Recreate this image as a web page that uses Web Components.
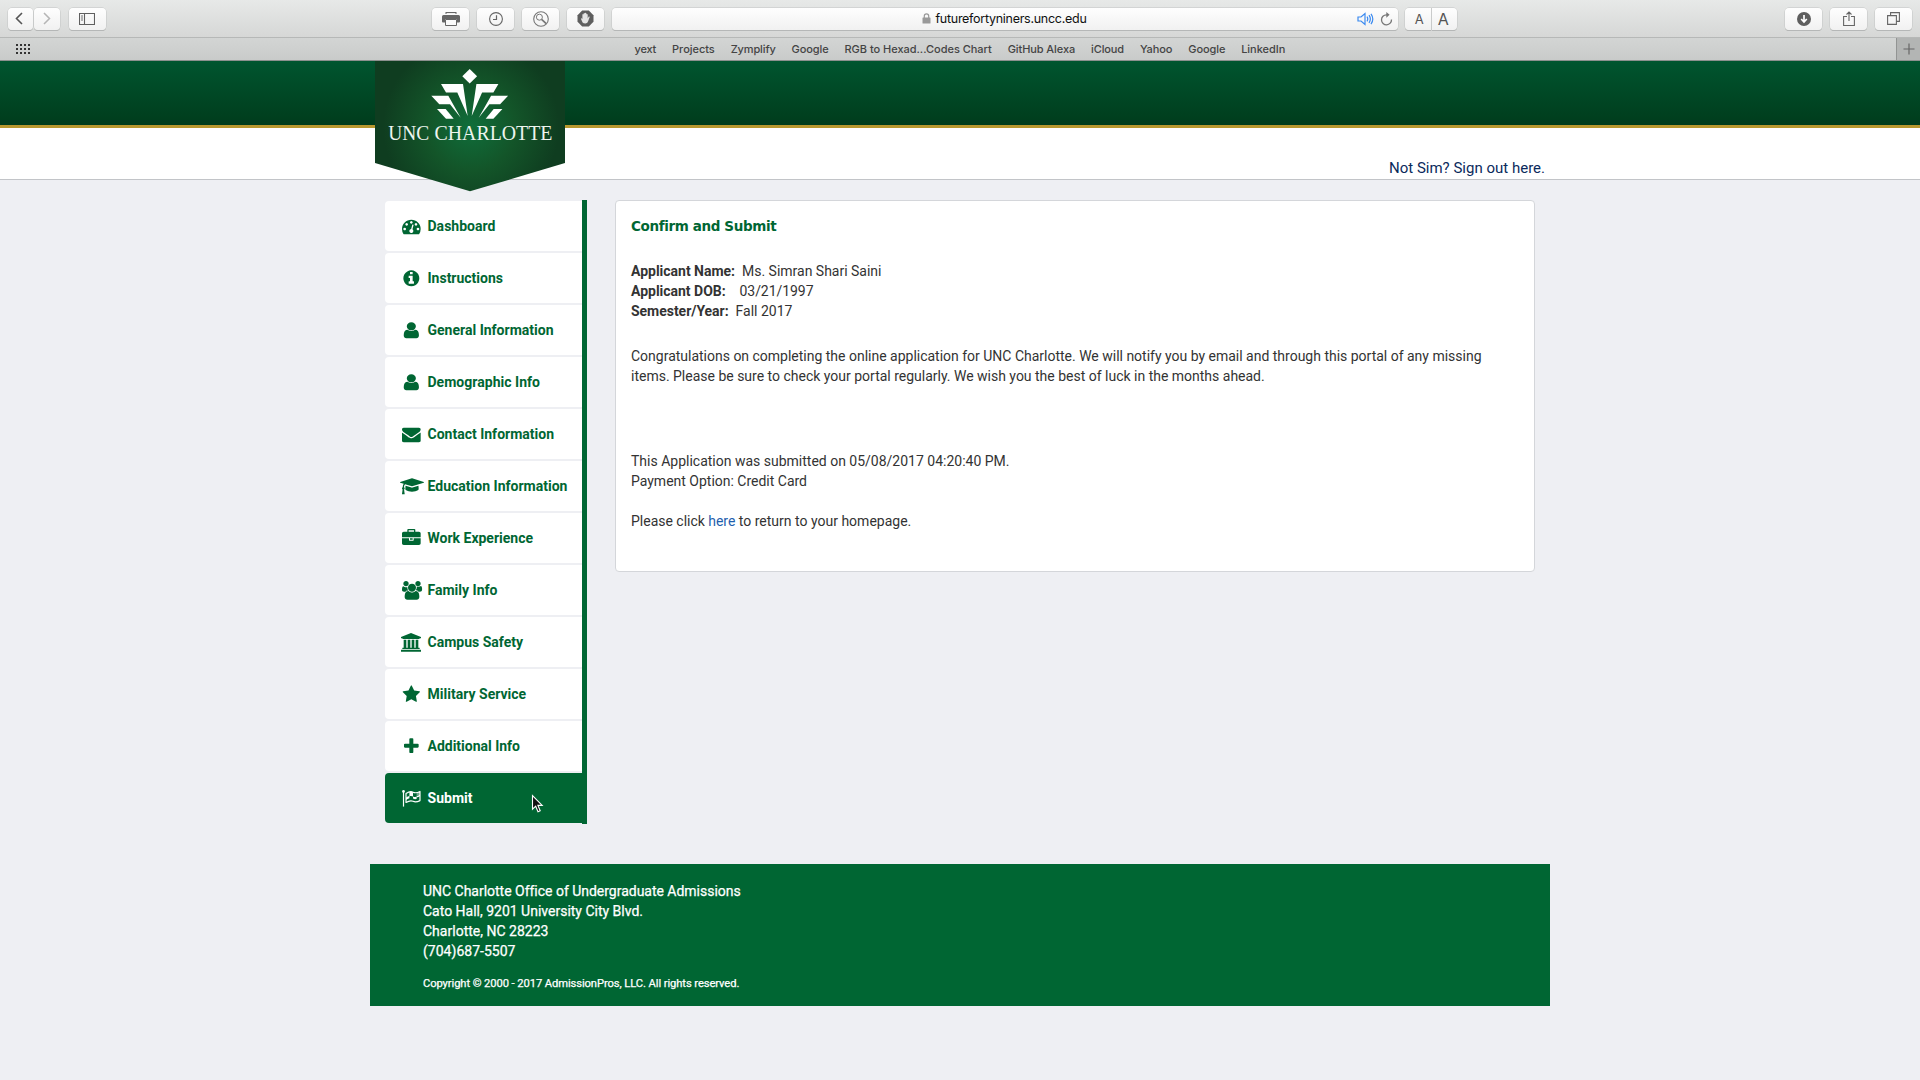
<!DOCTYPE html>
<html lang="en">
<head>
<meta charset="utf-8">
<title>Confirm and Submit</title>
<style>
html,body{margin:0;height:1080px;overflow:hidden}
body{background:#eeeff3;font-family:Roboto,"Liberation Sans",sans-serif;font-size:14px;line-height:20px;color:#333}
</style>
</head>
<body>
<portal-app></portal-app>
<script>
const make=(name,html,after)=>customElements.define(name,class extends HTMLElement{
  constructor(){super();this.attachShadow({mode:'open'});}
  connectedCallback(){if(this.done)return;this.done=true;this.shadowRoot.innerHTML=typeof html==='function'?html(this):html;if(after)after(this);}
});

/* One line of text spaced so that it takes the width in its w attribute. */
make('fit-line','<style>:host{display:inline-block;white-space:pre}span{display:inline-block}</style><span><slot></slot></span>',el=>{
  const w=parseFloat(el.getAttribute('w'));
  const n=el.textContent.length;
  const now=el.shadowRoot.querySelector('span').getBoundingClientRect().width;
  if(w&&n&&now){el.style.letterSpacing=((w-now)/n)+'px';}
});

const glyphs={
dash:[1792,'M384 1152q0-53-37.5-90.5t-90.5-37.5-90.5 37.5-37.5 90.5 37.5 90.5 90.5 37.5 90.5-37.5 37.5-90.5zm192-448q0-53-37.5-90.5t-90.5-37.5-90.5 37.5-37.5 90.5 37.5 90.5 90.5 37.5 90.5-37.5 37.5-90.5zm428 481l101-382q6-26-7.5-48.5t-38.5-29.5-48 6.5-30 39.5l-101 382q-60 5-107 43.5t-63 98.5q-20 77 20 146t117 89 146-20 89-117q16-60-6-117t-72-91zm660-33q0-53-37.5-90.5t-90.5-37.5-90.5 37.5-37.5 90.5 37.5 90.5 90.5 37.5 90.5-37.5 37.5-90.5zm-640-640q0-53-37.5-90.5t-90.5-37.5-90.5 37.5-37.5 90.5 37.5 90.5 90.5 37.5 90.5-37.5 37.5-90.5zm448 192q0-53-37.5-90.5t-90.5-37.5-90.5 37.5-37.5 90.5 37.5 90.5 90.5 37.5 90.5-37.5 37.5-90.5zm320 448q0 261-141 483-19 29-54 29h-1402q-35 0-54-29-141-221-141-483 0-182 71-348t191-286 286-191 348-71 348 71 286 191 191 286 71 348z'],
info:[1792,'M1152 1376v-160q0-14-9-23t-23-9h-96v-512q0-14-9-23t-23-9h-320q-14 0-23 9t-9 23v160q0 14 9 23t23 9h96v320h-96q-14 0-23 9t-9 23v160q0 14 9 23t23 9h448q14 0 23-9t9-23zm-128-896v-160q0-14-9-23t-23-9h-192q-14 0-23 9t-9 23v160q0 14 9 23t23 9h192q14 0 23-9t9-23zm640 416q0 209-103 385.5t-279.5 279.5-385.5 103-385.5-103-279.5-279.5-103-385.5 103-385.5 279.5-279.5 385.5-103 385.5 103 279.5 279.5 103 385.5z'],
user:[1792,'M1536 1399q0 109-62.5 187t-150.5 78h-854q-88 0-150.5-78t-62.5-187q0-85 8.5-160.5t31.5-152 58.5-131 94-89 134.5-34.5q131 128 313 128t313-128q76 0 134.5 34.5t94 89 58.5 131 31.5 152 8.5 160.5zm-256-887q0 159-112.5 271.5t-271.5 112.5-271.5-112.5-112.5-271.5 112.5-271.5 271.5-112.5 271.5 112.5 112.5 271.5z'],
mail:[1792,'M1792 710v794q0 66-47 113t-113 47h-1472q-66 0-113-47t-47-113v-794q44 49 101 87 362 246 497 345 57 42 92.5 65.5t94.5 48 110 24.5h2q51 0 110-24.5t94.5-48 92.5-65.5q170-123 498-345 57-39 100-87zm0-294q0 79-49 151t-122 123q-376 261-468 325-10 7-42.5 31t-54 38.5-52 32.5-57.5 27-50 9h-2q-23 0-50-9t-57.5-27-52-32.5-54-38.5-42.5-31q-91-64-262-182.5t-205-142.5q-62-42-117-115.5t-55-136.5q0-78 41.5-130t118.5-52h1472q65 0 112.5 47t47.5 113z'],
cap:[2304,'M1774 836l18 316q4 69-82 128t-235 93.5-323 34.5-323-34.5-235-93.5-82-128l18-316 574 181q22 7 48 7t48-7zm530-324q0 23-22 31l-1120 352q-4 1-10 1t-10-1l-652-206q-43 34-71 111.5t-34 178.5q63 36 63 109 0 69-58 107l58 433q2 14-8 25-9 11-24 11h-192q-15 0-24-11-10-11-8-25l58-433q-58-38-58-107 0-73 65-111 11-207 98-330l-333-104q-22-8-22-31t22-31l1120-352q4-1 10-1t10 1l1120 352q22 8 22 31z'],
work:[1792,'M640 256h512v-128h-512v128zm1152 640v480q0 66-47 113t-113 47h-1472q-66 0-113-47t-47-113v-480h672v160q0 26 19 45t45 19h320q26 0 45-19t19-45v-160h672zm-768 0v128h-256v-128h256zm768-480v384h-1792v-384q0-66 47-113t113-47h352v-160q0-40 28-68t68-28h576q40 0 68 28t28 68v160h352q66 0 113 47t47 113z'],
users:[1920,'M593 896q-162 5-265 128h-134q-82 0-138-40.5t-56-118.5q0-353 124-353 6 0 43.5 21t97.5 42.5 119 21.5q67 0 133-23-5 37-5 66 0 159 93 294zm1071 637q0 120-73 189.5t-194 69.5h-874q-121 0-194-69.5t-73-189.5q0-53 3.5-103.5t14-109 26.5-108.5 43-97.5 62-81 85.5-53.5 111.5-20q10 0 43 21.5t73 48 107 48 135 21.5 135-21.5 107-48 73-48 43-21.5q61 0 111.5 20t85.5 53.5 62 81 43 97.5 26.5 108.5 14 109 3.5 103.5zm-1024-1277q0 106-75 181t-181 75-181-75-75-181 75-181 181-75 181 75 75 181zm704 384q0 159-112.5 271.5t-271.5 112.5-271.5-112.5-112.5-271.5 112.5-271.5 271.5-112.5 271.5 112.5 112.5 271.5zm576 225q0 78-56 118.5t-138 40.5h-134q-103-123-265-128 93-135 93-294 0-29-5-66 66 23 133 23 59 0 119-21.5t97.5-42.5 43.5-21q124 0 124 353zm-128-609q0 106-75 181t-181 75-181-75-75-181 75-181 181-75 181 75 75 181z'],
bank:[2048,'M960 0l960 384v128h-128q0 26-20.5 45t-48.5 19h-1526q-28 0-48.5-19t-20.5-45h-128v-128zm-704 640h256v768h128v-768h256v768h128v-768h256v768h128v-768h256v768h59q28 0 48.5 19t20.5 45v64h-1664v-64q0-26 20.5-45t48.5-19h59v-768zm1595 960q28 0 48.5 19t20.5 45v128h-1920v-128q0-26 20.5-45t48.5-19h1782z'],
star:[1792,'M1728 647q0 22-26 48l-363 354 86 500q1 7 1 20 0 21-10.5 35.5t-30.5 14.5q-19 0-40-12l-449-236-449 236q-22 12-40 12-21 0-31.5-14.5t-10.5-35.5q0-6 2-20l86-500-364-354q-25-27-25-48 0-37 56-46l502-73 225-455q19-41 49-41t49 41l225 455 502 73q56 9 56 46z'],
plus:[1792,'M1600 736v192q0 40-28 68t-68 28h-416v416q0 40-28 68t-68 28h-192q-40 0-68-28t-28-68v-416h-416q-40 0-68-28t-28-68v-192q0-40 28-68t68-28h416v-416q0-40 28-68t68-28h192q40 0 68 28t28 68v416h416q40 0 68 28t28 68z']
};
const flag=`<svg width="19" height="18.67" viewBox="0 0 19 18.67" fill="none" stroke="currentColor"><circle cx="1.500" cy="2.400" r="1.300" fill="currentColor" stroke="none"/><path d="M1.500 2.500V17.600" stroke-width="1.200"/><path d="M4 4.400C7 2.600 9 2.200 11 3.200C13 4.200 15 4 18 2.500V11.600C15 13.100 13 13.300 11 12.300C9 11.300 7 11.700 4 13.500z" stroke-width="1.200" stroke-linejoin="round"/><g fill="currentColor" stroke="none"><path d="M7.400 3C8.800 2.500 10 2.700 11 3.200V7.600C10 7.100 8.800 6.900 7.400 7.400z"/><path d="M14.600 4C15.600 3.700 16.800 3.100 18 2.500V5.600C16.800 6.300 15.600 6.700 14.600 7z" opacity=".45"/><path d="M4 8.400C5.200 7.700 6.300 7.200 7.400 6.900V9.200C6.300 9.600 5.200 10.200 4 10.900z"/><path d="M11 7.400C12.200 8 13.300 8.100 14.600 7.800V10C13.300 10.300 12.200 10.200 11 9.600z"/><path d="M14.600 7.200C15.600 7 16.800 6.400 18 5.800V7.200C16.800 7.900 15.600 8.300 14.600 8.500z"/></g></svg>`;

make('nav-item',el=>{
  const k=el.getAttribute('icon'),g=glyphs[k];
  const ic=g?`<svg width="${(g[0]*18.67/1792).toFixed(2)}" height="18.67" viewBox="0 0 ${g[0]} 1792" fill="currentColor"><path d="${g[1]}"${k==='user'?' transform="translate(-125 0) scale(1.14 1)"':''}/></svg>`:flag;
  return `<style>:host{display:flex;align-items:center;box-sizing:border-box;height:50px;padding-left:14.500px;background:#fff;border-radius:4px 0 0 4px;color:#063;font-weight:700}
  :host([active]){background:#063;color:#fff}
  i{display:flex;justify-content:center;width:24px;margin-right:4px;flex:none}svg{display:block;flex:none;overflow:visible}</style><i>${ic}</i><fit-line w="${el.getAttribute('w')}">${el.getAttribute('label')}</fit-line>`;
});

make('side-nav',`<style>:host{display:flex;flex-direction:column;gap:2px;width:197px;height:622px;padding:1px 0;border-right:5px solid #063;flex:none}</style>
<nav-item icon="dash" label="Dashboard" w="68"></nav-item>
<nav-item icon="info" label="Instructions" w="75.500"></nav-item>
<nav-item icon="user" label="General Information" w="126"></nav-item>
<nav-item icon="user" label="Demographic Info" w="112.500"></nav-item>
<nav-item icon="mail" label="Contact Information" w="126.500"></nav-item>
<nav-item icon="cap" label="Education Information" w="140"></nav-item>
<nav-item icon="work" label="Work Experience" w="105.500"></nav-item>
<nav-item icon="users" label="Family Info" w="70"></nav-item>
<nav-item icon="bank" label="Campus Safety" w="95.500"></nav-item>
<nav-item icon="star" label="Military Service" w="98.700"></nav-item>
<nav-item icon="plus" label="Additional Info" w="92.500"></nav-item>
<nav-item icon="flag" label="Submit" w="45"  active></nav-item>`);

make('tool-button',`<style>:host{display:flex;align-items:center;justify-content:center;box-sizing:border-box;width:37px;height:22.500px;border-radius:4px;background:linear-gradient(#fefefe,#f1f1f1);box-shadow:0 0 0 .5px #c2c4c3,0 1px 0 #a9abaa;color:#666;flex:none}::slotted(svg){display:block;flex:none}</style><slot></slot>`);

make('address-bar',`<style>:host{display:flex;align-items:center;box-sizing:border-box;width:786px;height:22.500px;border-radius:4px;background:linear-gradient(#fefefe,#f1f1f1);box-shadow:0 0 0 .5px #c2c4c3,0 1px 0 #a9abaa;padding-left:310px;font:12.5px/22px Inter,sans-serif;color:#111;flex:none}
svg{display:block;flex:none}.lock{margin-right:5px}.sp{margin-left:auto;margin-right:6px}.re{margin-right:5px}</style>
<svg class="lock" width="9" height="11" viewBox="0 0 9 11"><rect x=".5" y="4.500" width="8" height="6" rx=".6" fill="#999"/><path d="M2.300 5V3a2.200 2.200 0 0 1 4.400 0v2" fill="none" stroke="#999" stroke-width="1.200"/></svg>
<fit-line w="151">futurefortyniners.uncc.edu</fit-line>
<svg class="sp" width="17" height="14" viewBox="0 0 17 14" fill="none" stroke="#3b8af0" stroke-width="1.200"><path d="M1 5h3l4-3.500v11L4 9H1z"/><path d="M10 4.700q1.500 2.300 0 4.600M12 3.200q2.700 3.800 0 7.600M14 1.800q3.600 5.200 0 10.400"/></svg>
<svg class="re" width="13" height="14" viewBox="0 0 13 14"><path d="M11.500 7.500A5 5 0 1 1 6.500 2.800h1.300" fill="none" stroke="#777" stroke-width="1.300"/><path d="M6.300 0l3.300 2.800-3.300 2.900z" fill="#777"/></svg>`);

make('browser-toolbar',`<style>
:host{display:flex;align-items:flex-start;box-sizing:border-box;height:38px;padding:7.500px 8px 0 7.500px;background:linear-gradient(#e7e9e8,#d6d7d6);border-bottom:1px solid #b6b8b7}
.nav{display:flex;gap:1px;margin-right:9px}.nav tool-button{width:25.500px}.nav tool-button:first-child{padding-right:2px}
.mid{display:flex;gap:8px;margin-left:326.500px;margin-right:7.500px}
.aa{display:flex;gap:1px;margin-left:7.500px}.aa tool-button{width:25.500px;font-family:Inter,sans-serif;color:#555}.aa tool-button:first-child{border-radius:4px 0 0 4px;font-size:13px;padding-left:3px}.aa tool-button:last-child{border-radius:0 4px 4px 0;font-size:16px;padding-right:2px}
.end{display:flex;gap:8px;margin-left:auto}svg{display:block}</style>
<div class="nav"><tool-button><svg width="8" height="13" viewBox="0 0 8 13" fill="none" stroke="#555" stroke-width="1.600"><path d="M7 1L1.500 6.500 7 12"/></svg></tool-button><tool-button><svg width="8" height="13" viewBox="0 0 8 13" fill="none" stroke="#b5b5b5" stroke-width="1.500"><path d="M1 1l5.500 5.500L1 12"/></svg></tool-button></div>
<tool-button><svg width="16" height="12" viewBox="0 0 16 12" fill="none" stroke="#5f5f5f"><path d="M.5.500h15v11H.5zM5.500.500v11" stroke-width="1.100"/><path d="M2 3h2M2 5h2M2 7h2" stroke-width=".9"/></svg></tool-button>
<div class="mid">
<tool-button><svg width="18" height="14" viewBox="0 0 18 14"><path d="M3.500 0h11v2h-11z" fill="#666"/><path d="M4.500 1h9v1h-9z" fill="#eee"/><path d="M1.500 3h15Q18 3 18 4.500v5q0 1-1 1h-2V7H3v3.500H1q-1 0-1-1v-5Q0 3 1.500 3z" fill="#666"/><path d="M3.500 7.500h11v6h-11z" fill="#fafafa" stroke="#666"/></svg></tool-button>
<tool-button><svg width="14" height="14" viewBox="0 0 14 14" fill="none" stroke="#666"><circle cx="7" cy="7" r="6.400" stroke-width="1.100"/><path d="M7.500 3.300v4.200H4" stroke-width="1.200"/></svg></tool-button>
<tool-button><svg width="16" height="16" viewBox="0 0 16 16" fill="none" stroke="#777"><circle cx="8" cy="8" r="7.300" stroke-width="1.100"/><circle cx="6.400" cy="6.200" r="3"/><path d="M8.600 8.400l4.600 4.300" stroke-width="1.700"/></svg></tool-button>
<tool-button><svg width="17" height="17" viewBox="0 0 17 17"><path d="M5.200.5h6.600l4.700 4.700v6.600l-4.700 4.700H5.200L.5 11.800V5.200z" fill="#5e5e5e"/><path d="M5.600 12.500L3.900 8.700q.8-.9 1.500.4V4.400q.6-.8 1.200 0v-1q.7-.9 1.400 0v-.3q.8-.8 1.400.2v.900q.9-.7 1.300.3v3.900l1-1.800q1-.4 1 .5l-1.500 4q-.5 2.300-2.600 2.300-2.300 0-3-.900z" fill="#e4e4e4"/></svg></tool-button>
</div>
<address-bar></address-bar>
<div class="aa"><tool-button>A</tool-button><tool-button>A</tool-button></div>
<div class="end">
<tool-button><svg width="14" height="14" viewBox="0 0 14 14"><circle cx="7" cy="7" r="7" fill="#5e5e5e"/><path d="M7 3v6M4.200 7L7 10l2.800-3" fill="none" stroke="#fff" stroke-width="1.700"/></svg></tool-button>
<tool-button><svg width="12" height="16" viewBox="0 0 12 16" fill="none" stroke="#666" stroke-width="1.100"><path d="M4 5.500H.6v9h10.800v-9H8M6 10V1M3.500 3.500L6 1l2.500 2.500"/></svg></tool-button>
<tool-button><svg width="13" height="13" viewBox="0 0 13 13" fill="none" stroke="#666" stroke-width="1.100"><path d="M.6 3.600h8.800v8.800H.6zM3.600 3.600v-3h8.800v8.800h-3"/></svg></tool-button>
</div>`);

make('bookmarks-bar',`<style>
:host{display:flex;align-items:stretch;box-sizing:border-box;height:23px;padding-left:16px;background:linear-gradient(#d3d5d4,#c9cbca);border-bottom:1px solid #8c908e;font:500 11px/22px Inter,sans-serif;color:#444}
.grid{display:block;margin-top:6px;flex:none}.list{display:flex;gap:15.900px;margin-left:604.500px;line-height:23px}
.plus{margin-left:auto;display:flex;align-items:center;justify-content:center;box-sizing:border-box;width:24px;background:#b3b5b4;border-left:1px solid #929493}</style>
<svg class="grid" width="14" height="10" viewBox="0 0 14 10" fill="#333">${[0,4,8,12].map(x=>[0,4,8].map(y=>`<rect x="${x}" y="${y}" width="2" height="2"/>`).join('')).join('')}</svg>
<div class="list">${[['yext',21.7],['Projects',42.7],['Zymplify',45],['Google',37],['RGB to Hexad...Codes Chart',147.300],['GitHub Alexa',67.500],['iCloud',33],['Yahoo',32.500],['Google',37],['LinkedIn',44]].map(b=>`<fit-line w="${b[1]}">${b[0]}</fit-line>`).join('')}</div>
<div class="plus"><svg width="12" height="12" viewBox="0 0 12 12"><path d="M6 .5v11M.5 6h11" stroke="#666" stroke-width="1.200"/></svg></div>`);

make('uncc-logo',`<style>:host{display:block;width:190px;height:131px}svg{display:block}text{font-family:"Liberation Serif",serif}</style>
<svg width="190" height="131" viewBox="0 0 190 131"><defs><radialGradient id="g" gradientUnits="userSpaceOnUse" cx="96" cy="66" r="88"><stop offset="0" stop-color="#0f6e3b"/><stop offset=".5" stop-color="#135529"/><stop offset="1" stop-color="#0f3d20"/></radialGradient></defs>
<path d="M0 0h190v102L95 130.300 0 102z" fill="url(#g)"/>
<g fill="#fff"><path d="M94.700 8l7.400 7.300-7.400 7.300-7.400-7.300z"/>
<g><path d="M66 23h22l4.700 32-10.400-23.500H71z"/><path d="M56.300 34.700h17L85.700 56.700 75 43.300H64.300z"/><path d="M62 48h8.700l8 9.800H71z"/></g>
<g transform="matrix(-1 0 0 1 189.400 0)"><path d="M66 23h22l4.700 32-10.400-23.500H71z"/><path d="M56.300 34.700h17L85.700 56.700 75 43.300H64.300z"/><path d="M62 48h8.700l8 9.800H71z"/></g></g>
<text x="13.300" y="78.500" font-size="21" fill="#eef5ef" textLength="60" lengthAdjust="spacingAndGlyphs" xml:space="preserve"><tspan textLength="41" lengthAdjust="spacingAndGlyphs">UNC</tspan></text><text x="59.500" y="78.500" font-size="21" fill="#eef5ef" textLength="118" lengthAdjust="spacingAndGlyphs">CHARLOTTE</text></svg>`);

make('site-header',`<style>:host{display:block;position:relative}
.green{height:64px;background:linear-gradient(#00552f,#003c1c)}.gold{height:3px;background:#b8982f}
.white{display:flex;justify-content:flex-end;box-sizing:border-box;height:52px;background:#fff;border-bottom:1px solid #c2c4c8;padding:30px 375px 0 0}
a{font-size:15px;line-height:20px;color:#0b2a5c}uncc-logo{position:absolute;left:375px;top:0;z-index:1}</style>
<div class="green"></div><div class="gold"></div><div class="white"><a><fit-line w="156">Not Sim? Sign out here.</fit-line></a></div><uncc-logo></uncc-logo>`);

make('confirm-card',`<style>:host{display:block;box-sizing:border-box;width:920px;height:372px;border:1px solid #d4d6da;border-radius:4px;background:#fff;padding:15px;color:#333;flex:none}
h1{margin:0 0 25px;font:bold 13.500px/20px "DejaVu Sans",sans-serif;color:#063}
p{margin:0;height:20px;white-space:pre;display:flex}.g{margin-top:25px}.h{margin-top:65px}.i{margin-top:20px}a{color:#1f5fae}</style>
<h1><fit-line w="144.800">Confirm and Submit</fit-line></h1>
<p><b><fit-line w="111">Applicant Name:  </fit-line></b><fit-line w="139.500">Ms. Simran Shari Saini</fit-line></p>
<p><b><fit-line w="108.500">Applicant DOB:    </fit-line></b><fit-line w="74">03/21/1997</fit-line></p>
<p><b><fit-line w="104.500">Semester/Year:  </fit-line></b><fit-line w="57">Fall 2017</fit-line></p>
<p class="g"><fit-line w="850.500">Congratulations on completing the online application for UNC Charlotte. We will notify you by email and through this portal of any missing</fit-line></p>
<p><fit-line w="633.700">items. Please be sure to check your portal regularly. We wish you the best of luck in the months ahead.</fit-line></p>
<p class="h"><fit-line w="378.500">This Application was submitted on 05/08/2017 04:20:40 PM.</fit-line></p>
<p><fit-line w="176">Payment Option: Credit Card</fit-line></p>
<p class="i"><fit-line w="77.300">Please click </fit-line><a><fit-line w="27">here</fit-line></a><fit-line w="176"> to return to your homepage.</fit-line></p>`);

make('site-footer',`<style>:host{display:block;box-sizing:border-box;width:1180px;height:142px;margin:40px 0 0 370px;padding:17px 53px;background:#063;color:#fff;-webkit-text-stroke:.25px #fff}
p{margin:0;height:20px}.c{margin-top:12.500px;font-size:11.200px}</style>
<p><fit-line w="316.500">UNC Charlotte Office of Undergraduate Admissions</fit-line></p>
<p><fit-line w="220">Cato Hall, 9201 University City Blvd.</fit-line></p>
<p><fit-line w="125.500">Charlotte, NC 28223</fit-line></p>
<p><fit-line w="92.500">(704)687-5507</fit-line></p>
<p class="c"><fit-line w="316.300">Copyright © 2000 - 2017 AdmissionPros, LLC. All rights reserved.</fit-line></p>`);

make('mouse-pointer',`<style>:host{display:block;position:absolute;left:531px;top:794px;z-index:2}svg{display:block}</style><svg width="13" height="20" viewBox="0 0 13 20"><path d="M1.500 1.500v13.700l3.200-3 2.300 5.500 2.200-.9-2.300-5.400h4.300z" fill="#111" stroke="#fff" stroke-width="1.100"/></svg>`);

make('portal-app',`<style>:host{display:block;height:1080px;background:#eeeff3}main{display:flex;gap:28px;padding:20px 0 0 385px}</style>
<browser-toolbar></browser-toolbar><bookmarks-bar></bookmarks-bar><site-header></site-header>
<main><side-nav></side-nav><confirm-card></confirm-card></main><site-footer></site-footer><mouse-pointer></mouse-pointer>`);
</script>
</body>
</html>
